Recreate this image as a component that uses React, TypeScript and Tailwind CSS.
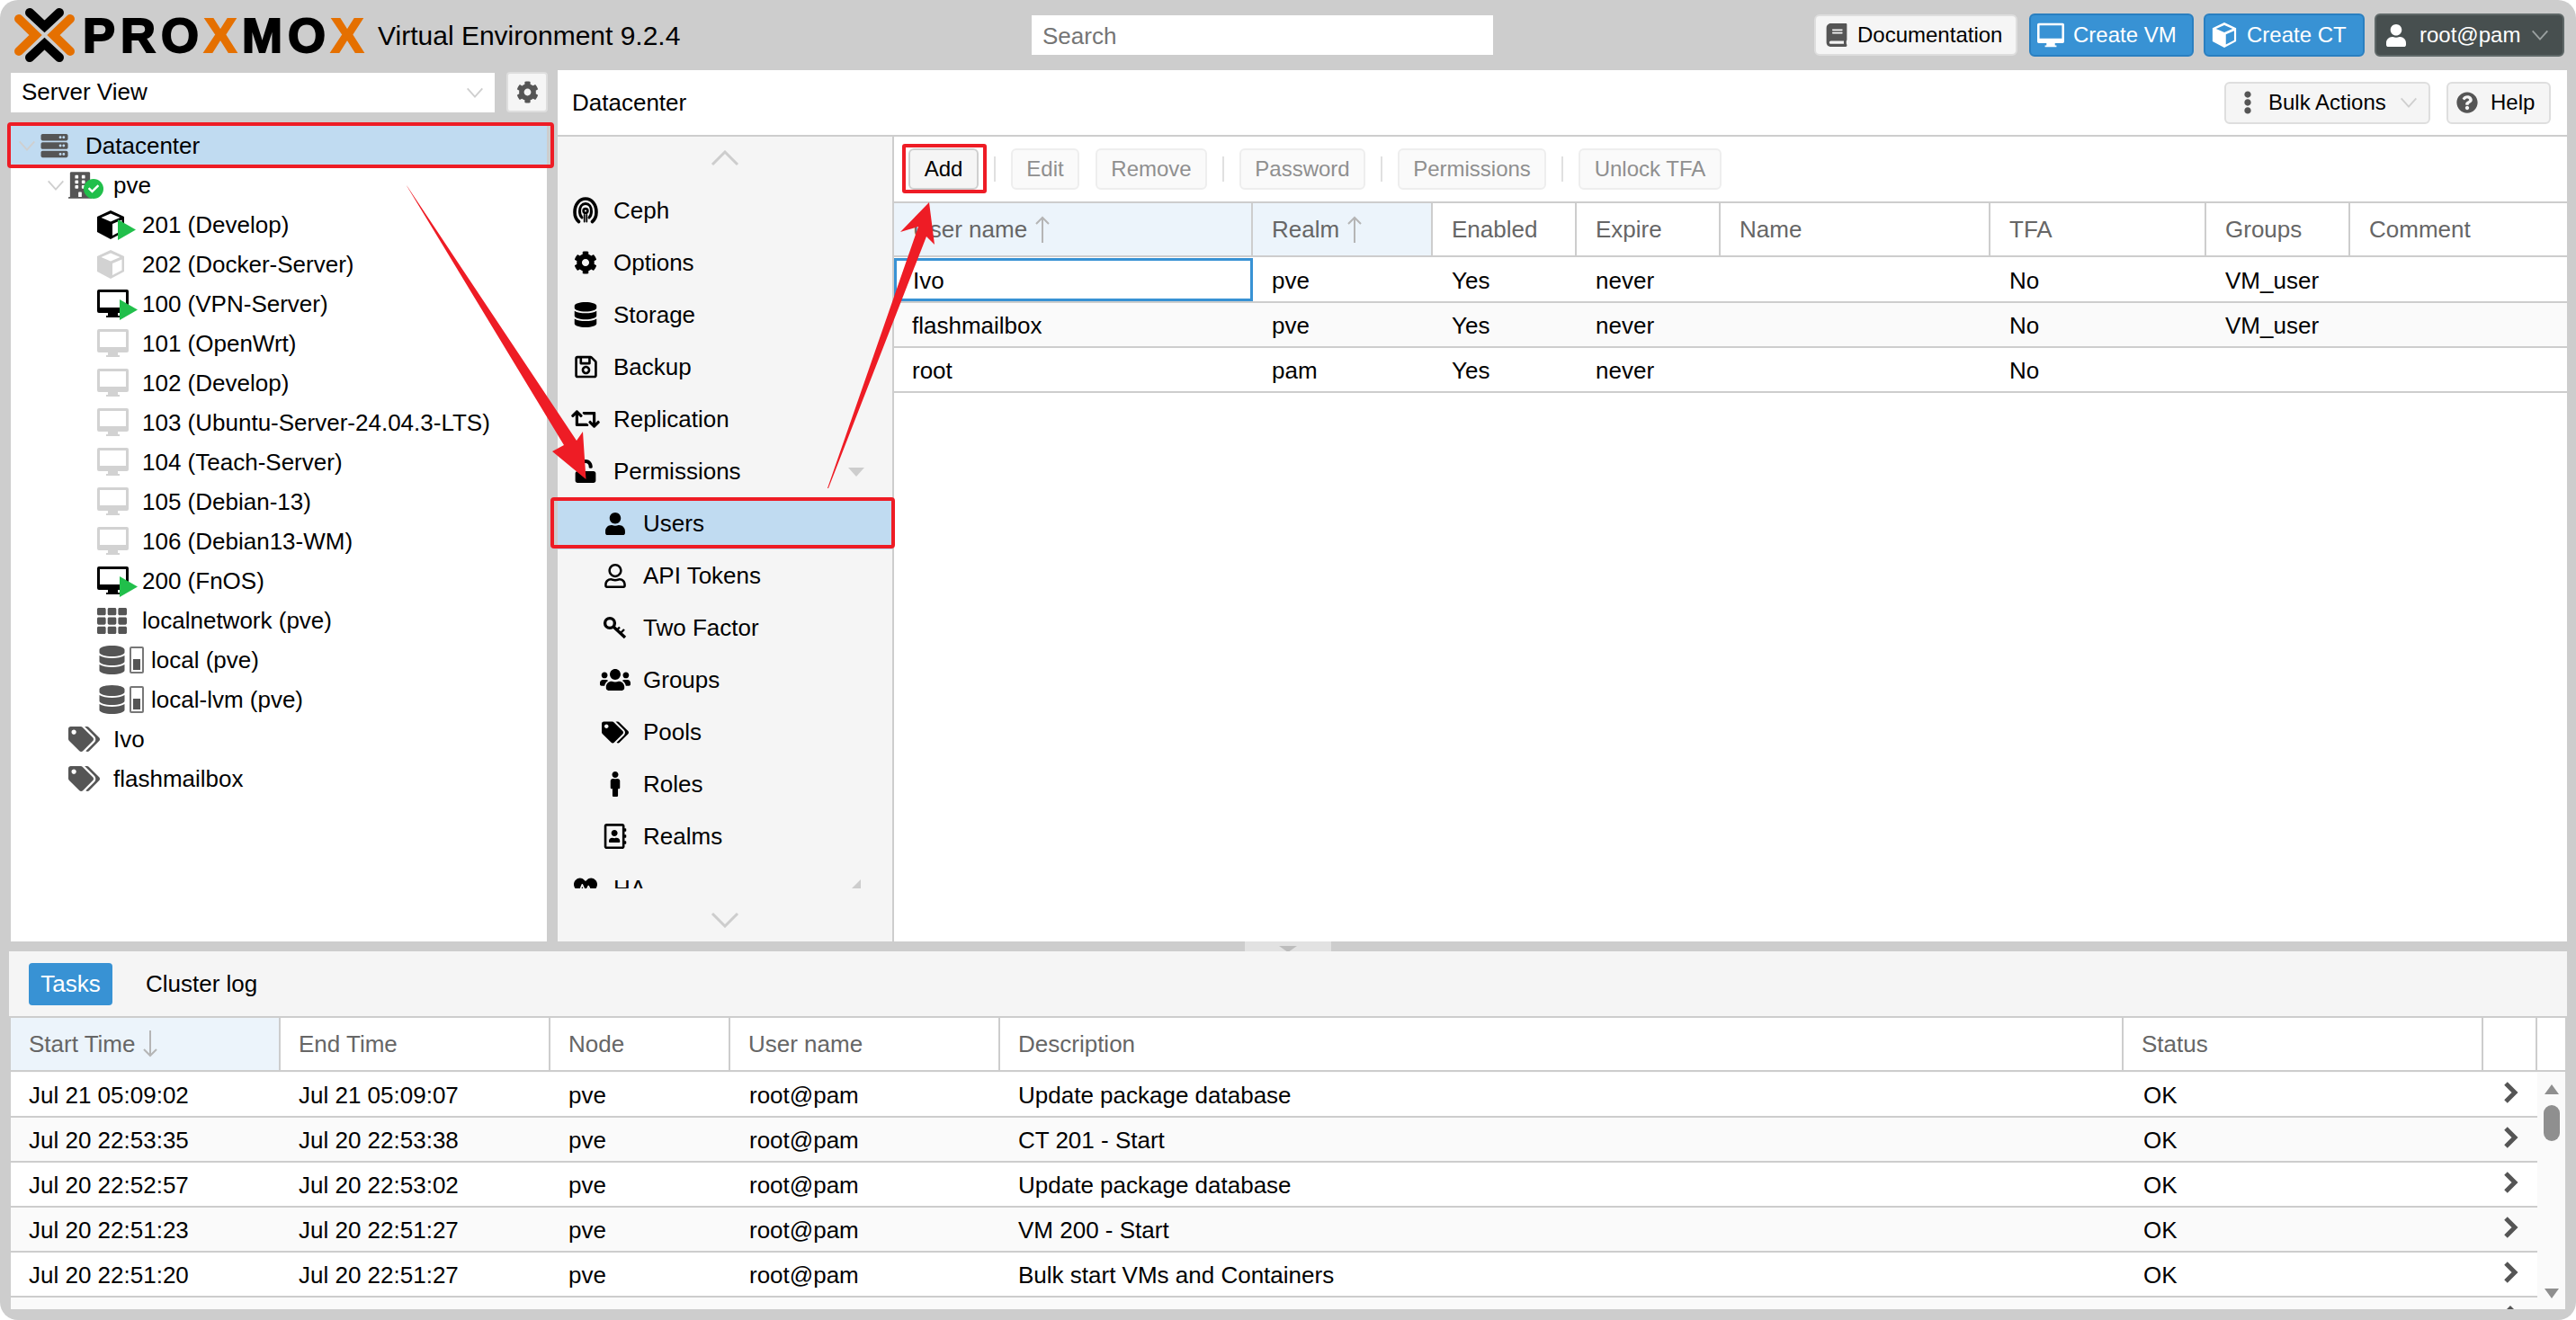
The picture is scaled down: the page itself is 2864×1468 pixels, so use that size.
import React from 'react';
import {
  FaBook, FaCog, FaDatabase, FaRegSave, FaRetweet, FaUnlock, FaUser, FaRegUser, FaUsers, FaTags,
  FaMale, FaRegAddressBook, FaQuestionCircle, FaEllipsisV, FaHeartbeat, FaTh, FaServer, FaBuilding, FaCheck,
} from 'react-icons/fa';

const Monitor = ({ className }: { className: string }) => (
  <svg viewBox="0 0 35 31" className={className} fill="currentColor">
    <path fillRule="evenodd" d="M2 0h31a2 2 0 0 1 2 2v22a2 2 0 0 1-2 2H23v3h2v2H10v-2h2v-3H2a2 2 0 0 1-2-2V2a2 2 0 0 1 2-2zM3 3v17h29V3z" />
  </svg>
);

const Cube = ({ className }: { className: string }) => (
  <svg viewBox="0 0 30 32" className={className} fill="currentColor">
    <path fillRule="evenodd" d="M15 0L30 7V24L15 32L0 24V7zM15 3.5L4.5 8L15 12.5L25.5 8zM17 15V28L27.5 22.5V10.5z" />
  </svg>
);

const Play = ({ vm }: { vm: boolean }) => (
  <svg viewBox="0 0 20 23" className={`absolute w-[20px] h-[23px] ${vm ? 'left-[25px] top-[11px]' : 'left-[23px] top-[10px]'}`}>
    <polygon points="0,0 20,11.5 0,23" fill="#21bf4b" />
  </svg>
);

const StatusBar = () => (
  <span className="ml-[5px] w-[16px] h-[30px] border-2 border-[#777] rounded-[2px] flex flex-col justify-end p-[2px]">
    <span className="block h-[12px] bg-[#555]" />
  </span>
);

const Ceph = () => (
  <svg viewBox="0 0 28 30" className="w-[28px] h-[30px]" fill="none" stroke="currentColor" strokeWidth="3.6" strokeLinecap="round">
    <path d="M6.5 27.5C3.5 25 2 21.5 2 17C2 8.5 7 2 14 2S26 8.5 26 17C26 21.5 24.5 25 21.5 27.5" />
    <path d="M10 23C8 21 7.5 18.5 7.5 16C7.5 11 10 7.5 14 7.5S20.5 11 20.5 16C20.5 18.5 20 21 18 23" strokeWidth="3" />
    <circle cx="14" cy="15.5" r="2.4" strokeWidth="2.6" />
    <path d="M12.7 20V27.5M15.3 20V27.5" strokeWidth="1.8" />
  </svg>
);

const Key = () => (
  <svg viewBox="0 0 28 26" className="w-[28px] h-[26px]" fill="none" stroke="currentColor" strokeWidth="3.4">
    <circle cx="8" cy="8" r="5.4" />
    <path d="M12 12L25 24" />
    <path d="M20 19L24 15M16 15.5L19 12.5" strokeWidth="2.4" />
  </svg>
);

const Arrow = ({ down }: { down?: boolean }) => (
  <svg viewBox="0 0 18 30" className="w-[18px] h-[30px] ml-[8px]" fill="none" stroke="#b5b5b5" strokeWidth="2">
    {down ? <path d="M9 0V28M2 21L9 28L16 21" /> : <path d="M9 30V2M2 9L9 2L16 9" />}
  </svg>
);

const VChevron = ({ up }: { up?: boolean }) => (
  <svg viewBox="0 0 32 18" className="w-[32px] h-[18px]" fill="none" stroke="#cdcdcd" strokeWidth="3">
    {up ? <polyline points="2,16 16,2 30,16" /> : <polyline points="2,2 16,16 30,2" />}
  </svg>
);

const Caret = ({ className }: { className: string }) => (
  <svg viewBox="0 0 26 26" className={`shrink-0 ${className}`} fill="none" stroke="currentColor" strokeWidth="2">
    <polyline points="4,8 13,18 22,8" />
  </svg>
);

const TreeRow = ({ pad, icon, iconW, active, chevronPad, children }: { pad: string; icon: React.ReactNode; iconW: string; active?: boolean; chevronPad?: string; children: React.ReactNode }) => (
  <div className={`h-[44px] flex items-center relative ${pad} ${active ? 'bg-[#c0dbf1]' : ''}`}>
    {chevronPad ? <Caret className={`absolute ${chevronPad} w-[24px] h-[24px] text-[#cfcfcf]`} /> : null}
    <span className={`flex items-center relative shrink-0 ${iconW}`}>{icon}</span>
    <span className="whitespace-nowrap">{children}</span>
  </div>
);

const vms: [string, string, boolean][] = [
  ['201 (Develop)', 'ct', true],
  ['202 (Docker-Server)', 'ct', false],
  ['100 (VPN-Server)', 'vm', true],
  ['101 (OpenWrt)', 'vm', false],
  ['102 (Develop)', 'vm', false],
  ['103 (Ubuntu-Server-24.04.3-LTS)', 'vm', false],
  ['104 (Teach-Server)', 'vm', false],
  ['105 (Debian-13)', 'vm', false],
  ['106 (Debian13-WM)', 'vm', false],
  ['200 (FnOS)', 'vm', true],
];

const Tree = () => (
  <div className="w-[596px] flex-1 mt-[12px] bg-white pt-[3px] overflow-hidden">
    <TreeRow pad="pl-[31px]" iconW="w-[52px]" active chevronPad="left-[6px]" icon={<FaServer className="w-[35px] h-[30px] text-[#555]" />}>Datacenter</TreeRow>
    <TreeRow pad="pl-[64px]" iconW="w-[50px]" chevronPad="left-[38px]" icon={
      <span className="relative block w-[40px] h-[34px]">
        <FaBuilding className="absolute left-0 top-0 w-[26px] h-[34px] text-[#555]" />
        <span className="absolute left-[17px] top-[10px] w-[22px] h-[22px] rounded-full bg-[#21bf4b] flex items-center justify-center">
          <FaCheck className="w-[12px] h-[12px] text-white" />
        </span>
      </span>
    }>pve</TreeRow>
    {vms.map(([name, kind, running]) => (
      <TreeRow key={name} pad="pl-[96px]" iconW="w-[50px]" icon={
        <span className="relative block w-[36px] h-[32px]">
          {kind === 'ct'
            ? <Cube className={`w-[30px] h-[32px] ${running ? 'text-black' : 'text-[#d2d2d2]'}`} />
            : <Monitor className={`w-[35px] h-[31px] ${running ? 'text-black' : 'text-[#d2d2d2]'}`} />}
          {running ? <Play vm={kind === 'vm'} /> : null}
        </span>
      }>{name}</TreeRow>
    ))}
    <TreeRow pad="pl-[96px]" iconW="w-[50px]" icon={<FaTh className="w-[33px] h-[33px] text-[#555]" />}>localnetwork (pve)</TreeRow>
    {['local (pve)', 'local-lvm (pve)'].map((n) => (
      <TreeRow key={n} pad="pl-[98px]" iconW="w-[58px]" icon={<><FaDatabase className="w-[29px] h-[32px] text-[#555]" /><StatusBar /></>}>{n}</TreeRow>
    ))}
    {['Ivo', 'flashmailbox'].map((n) => (
      <TreeRow key={n} pad="pl-[64px]" iconW="w-[50px]" icon={<FaTags className="w-[35px] h-[30px] text-[#555]" />}>{n}</TreeRow>
    ))}
  </div>
);

const navItems: [string, React.ReactNode, boolean, boolean][] = [
  ['Ceph', <Ceph />, false, false],
  ['Options', <FaCog className="w-[26px] h-[26px]" />, false, false],
  ['Storage', <FaDatabase className="w-[26px] h-[28px]" />, false, false],
  ['Backup', <FaRegSave className="w-[25px] h-[28px]" />, false, false],
  ['Replication', <FaRetweet className="w-[32px] h-[28px]" />, false, false],
  ['Permissions', <FaUnlock className="w-[26px] h-[26px]" />, false, false],
  ['Users', <FaUser className="w-[22px] h-[25px]" />, true, true],
  ['API Tokens', <FaRegUser className="w-[24px] h-[27px]" />, true, false],
  ['Two Factor', <Key />, true, false],
  ['Groups', <FaUsers className="w-[34px] h-[28px]" />, true, false],
  ['Pools', <FaTags className="w-[30px] h-[25px]" />, true, false],
  ['Roles', <FaMale className="w-[18px] h-[28px]" />, true, false],
  ['Realms', <FaRegAddressBook className="w-[26px] h-[28px]" />, true, false],
  ['HA', <FaHeartbeat className="w-[28px] h-[26px]" />, false, false],
];

const Nav = () => (
  <div className="w-[374px] shrink-0 bg-[#f5f5f5] border-r-2 border-[#cdcdcd] flex flex-col">
    <div className="h-[53px] flex items-start justify-center pt-[15px]"><VChevron up /></div>
    <div className="h-[783px] overflow-hidden">
      {navItems.map(([label, icon, sub, active]) => (
        <div key={label} className={`h-[58px] flex items-center relative ${active ? 'bg-[#c0dbf1]' : ''}`}>
          <span className={`${sub ? 'ml-[44px] mr-[11px]' : 'ml-[11px] mr-[11px]'} w-[40px] flex justify-center shrink-0`}>{icon}</span>
          <span>{label}</span>
          {label === 'Permissions' ? <span className="absolute left-[323px] top-[25px] w-0 h-0 border-x-[9px] border-x-transparent border-t-[10px] border-t-[#cdcdcd]" /> : null}
          {label === 'HA' ? <span className="absolute left-[326px] top-[19px] w-0 h-0 border-l-[11px] border-l-transparent border-b-[11px] border-b-[#cdcdcd]" /> : null}
        </div>
      ))}
    </div>
    <div className="flex-1 flex justify-center pt-[26px]"><VChevron /></div>
  </div>
);

const ToolButton = ({ label, w, on }: { label: string; w: string; on?: boolean }) => (
  <div className={`h-[46px] ${w} rounded-[6px] border-2 flex items-center justify-center text-[24px] ${on ? 'bg-[#f5f5f5] border-[#cfcfcf] text-black' : 'bg-[#fafafa] border-[#eeeeee] text-[#8f8f8f]'}`}>{label}</div>
);
const Sep = () => <div className="w-[2px] h-[28px] bg-[#e0e0e0] mx-[17px]" />;

const userCols = 'grid grid-cols-[399px_200px_160px_160px_300px_240px_160px_239px]';
const userHead = ['User name', 'Realm', 'Enabled', 'Expire', 'Name', 'TFA', 'Groups', 'Comment'];
const userRows = [
  ['Ivo', 'pve', 'Yes', 'never', '', 'No', 'VM_user', ''],
  ['flashmailbox', 'pve', 'Yes', 'never', '', 'No', 'VM_user', ''],
  ['root', 'pam', 'Yes', 'never', '', 'No', '', ''],
];

const UsersPanel = () => (
  <div className="flex-1 flex flex-col bg-white min-w-0">
    <div className="h-[74px] border-b-2 border-[#cdcdcd] flex items-center pl-[16px]">
      <ToolButton label="Add" w="w-[78px]" on />
      <Sep />
      <ToolButton label="Edit" w="w-[76px] mr-[18px]" />
      <ToolButton label="Remove" w="w-[124px]" />
      <Sep />
      <ToolButton label="Password" w="w-[140px]" />
      <Sep />
      <ToolButton label="Permissions" w="w-[165px]" />
      <Sep />
      <ToolButton label="Unlock TFA" w="w-[159px]" />
    </div>
    <div className={`${userCols} h-[60px] border-b-2 border-[#cdcdcd] text-[#666]`}>
      {userHead.map((h, i) => (
        <div key={h} className={`flex items-center pl-[21px] border-r-2 border-[#cdcdcd] last:border-r-0 ${i < 2 ? 'bg-[#ecf4fb]' : ''}`}>
          {h}{i < 2 ? <Arrow /> : null}
        </div>
      ))}
    </div>
    <div className="pt-px">
      {userRows.map((r, i) => (
        <div key={r[0]} className={`${userCols} h-[50px] border-b-2 border-[#cdcdcd] ${i === 1 ? 'bg-[#fafafa]' : ''}`}>
          {r.map((c, j) => (
            <div key={j} className={`flex items-center pt-[2px] ${i === 0 && j === 0 ? 'border-[3px] border-[#3892d4] pl-[18px] pt-0' : j === 0 ? 'pl-[20px]' : 'pl-[21px]'}`}>{c}</div>
          ))}
        </div>
      ))}
    </div>
  </div>
);

const taskCols = 'grid grid-cols-[300px_300px_200px_300px_1249px_400px_60px_31px]';
const taskRowCols = 'grid grid-cols-[300px_300px_200px_300px_1249px_400px_60px]';
const taskHead = ['Start Time', 'End Time', 'Node', 'User name', 'Description', 'Status', '', ''];
const tasks = [
  ['Jul 21 05:09:02', 'Jul 21 05:09:07', 'Update package database'],
  ['Jul 20 22:53:35', 'Jul 20 22:53:38', 'CT 201 - Start'],
  ['Jul 20 22:52:57', 'Jul 20 22:53:02', 'Update package database'],
  ['Jul 20 22:51:23', 'Jul 20 22:51:27', 'VM 200 - Start'],
  ['Jul 20 22:51:20', 'Jul 20 22:51:27', 'Bulk start VMs and Containers'],
  ['', '', ''],
];

const Bottom = () => (
  <div className="mx-[10px] h-[398px] flex flex-col shrink-0">
    <div className="h-[74px] shrink-0 bg-[#f5f5f5] border-b-2 border-[#cdcdcd] flex items-center pl-[22px]">
      <div className="w-[93px] h-[47px] rounded-[4px] bg-[#3892d4] text-white flex items-center justify-center">Tasks</div>
      <div className="ml-[37px]">Cluster log</div>
    </div>
    <div className="flex-1 border-x-2 border-[#cdcdcd] flex flex-col min-h-0 bg-white">
      <div className={`${taskCols} h-[60px] shrink-0 border-b-2 border-[#cdcdcd] text-[#666]`}>
        {taskHead.map((h, i) => (
          <div key={i} className={`flex items-center pl-[20px] border-r-2 border-[#cdcdcd] last:border-r-0 ${i === 0 ? 'bg-[#ecf4fb]' : ''}`}>
            {h}{i === 0 ? <Arrow down /> : null}
          </div>
        ))}
      </div>
      <div className="flex flex-1 min-h-0 overflow-hidden pt-px bg-[#fafafa]">
        <div className="w-[2809px] shrink-0">
          {tasks.map((t, i) => (
            <div key={i} className={`${taskRowCols} h-[50px] border-b-2 border-[#cdcdcd] ${i % 2 ? 'bg-[#fafafa]' : 'bg-white'}`}>
              <div className="flex items-center pt-[2px] pl-[20px]">{t[0]}</div>
              <div className="flex items-center pt-[2px] pl-[20px]">{t[1]}</div>
              <div className="flex items-center pt-[2px] pl-[20px]">{t[0] && 'pve'}</div>
              <div className="flex items-center pt-[2px] pl-[21px]">{t[0] && 'root@pam'}</div>
              <div className="flex items-center pt-[2px] pl-[20px]">{t[2]}</div>
              <div className="flex items-center pt-[2px] pl-[22px]">{t[0] && 'OK'}</div>
              {t[0] ? (
                <div className="flex items-center justify-center pb-[5px]">
                  <svg viewBox="0 0 17 26" className="w-[17px] h-[26px]" fill="none" stroke="#555" strokeWidth="5">
                    <polyline points="3,3 13,13 3,23" />
                  </svg>
                </div>
              ) : (
                <div className="flex justify-center pt-[9px]">
                  <span className="w-0 h-0 border-x-[5px] border-x-transparent border-b-[5px] border-b-[#555]" />
                </div>
              )}
            </div>
          ))}
        </div>
        <div className="w-[31px] relative flex flex-col items-center pt-[13px]">
          <span className="w-0 h-0 border-x-[8px] border-x-transparent border-b-[11px] border-b-[#8f8f8f]" />
          <span className="mt-[12px] w-[18px] h-[40px] rounded-[9px] bg-[#8f8f8f]" />
          <span className="mt-auto mb-[12px] w-0 h-0 border-x-[8px] border-x-transparent border-t-[11px] border-t-[#8f8f8f]" />
        </div>
      </div>
    </div>
  </div>
);

const Annotations = () => (
  <svg className="absolute left-0 top-0 w-[2864px] h-[1468px] pointer-events-none" viewBox="0 0 2864 1468">
    <g fill="none" stroke="#ee1c25" strokeWidth="4">
      <rect x="10" y="138" width="604" height="47" rx="2" />
      <rect x="614" y="555" width="379" height="53" rx="2" />
      <rect x="1005" y="162" width="90" height="51" rx="1" />
    </g>
    <g fill="#ee1c25">
      <polygon points="452,206 641,490 648,480 651.5,533 614,502 627,495 453,208" />
      <polygon points="920,543 1021,252 1001,258 1033,225 1039,272 1030,263 921,543" />
    </g>
  </svg>
);

export default function App() {
  return (
    <div className="relative w-[2864px] h-[1468px] bg-white overflow-hidden font-['Liberation_Sans',Arial,sans-serif] text-[26px] text-black">
      <div className="h-full rounded-[20px] bg-[#cdcdcd] flex flex-col">
        {/* top bar */}
        <header className="h-[78px] shrink-0 flex items-center">
          <div className="w-[1147px] shrink-0 flex items-center">
            <svg viewBox="0 0 100 76" className="w-[100px] h-[76px] shrink-0" fill="none" strokeWidth="10" strokeLinecap="round">
              <polyline points="21,20 39.5,38 21,56" stroke="#e57000" strokeLinejoin="miter" />
              <polyline points="78,20 59.5,38 78,56" stroke="#e57000" strokeLinejoin="miter" />
              <polyline points="33,13 49.5,28.5 66,13" stroke="#000" strokeLinejoin="miter" />
              <polyline points="33,63 49.5,47.5 66,63" stroke="#000" strokeLinejoin="miter" />
            </svg>
            <span className="-ml-[8px] text-[54px] leading-none font-bold tracking-[6px] [-webkit-text-stroke:2px_black]">
              PRO<span className="text-[#e57000] [-webkit-text-stroke:2px_#e57000]">X</span>MO<span className="text-[#e57000] [-webkit-text-stroke:2px_#e57000]">X</span>
            </span>
            <span className="ml-[10px] text-[30px] whitespace-nowrap">Virtual Environment 9.2.4</span>
          </div>
          <div className="w-[513px] h-[44px] bg-white flex items-center pl-[12px] pt-[3px] text-[#757575]">Search</div>
          <div className="flex-1 flex justify-end items-center pr-[13px] text-[24px]">
            <div className="w-[226px] h-[46px] bg-[#f5f5f5] border-2 border-[#dedede] rounded-[6px] flex items-center pl-[10px]">
              <FaBook className="w-[26px] h-[26px] text-[#555] mr-[10px]" />Documentation
            </div>
            <div className="ml-[13px] w-[183px] h-[48px] bg-[#3892d4] border-2 border-[#2a7fc0] rounded-[6px] flex items-center pl-[7px] text-white">
              <Monitor className="w-[30px] h-[28px] mr-[10px]" />Create VM
            </div>
            <div className="ml-[11px] w-[179px] h-[48px] bg-[#3892d4] border-2 border-[#2a7fc0] rounded-[6px] flex items-center pl-[7px] text-white">
              <Cube className="w-[28px] h-[28px] mr-[11px]" />Create CT
            </div>
            <div className="ml-[11px] w-[211px] h-[48px] bg-[#474f4f] border-2 border-[#5f6868] rounded-[6px] flex items-center pl-[11px] text-white">
              <FaUser className="w-[22px] h-[27px] mr-[15px]" />root@pam
              <Caret className="ml-[10px] w-[24px] h-[24px] text-[#9aa0a0]" />
            </div>
          </div>
        </header>
        {/* main */}
        <div className="flex-1 flex min-h-0 pr-[10px]">
          <div className="ml-[12px] w-[597px] shrink-0 flex flex-col pt-[2px]">
            <div className="flex items-center shrink-0">
              <div className="w-[538px] h-[44px] bg-white flex items-center pl-[12px] pr-[10px] justify-between">
                Server View<Caret className="w-[24px] h-[24px] text-[#cfcfcf]" />
              </div>
              <div className="ml-[13px] w-[46px] h-[45px] bg-[#f5f5f5] rounded-[4px] border-2 border-[#dedede] flex items-center justify-center">
                <FaCog className="w-[25px] h-[25px] text-[#555]" />
              </div>
            </div>
            <Tree />
          </div>
          <div className="ml-[11px] flex-1 flex flex-col min-w-0">
            <div className="h-[74px] shrink-0 bg-white border-b-2 border-[#cdcdcd] flex items-center pl-[16px] pr-[18px]">
              <span>Datacenter</span>
              <div className="ml-auto w-[229px] h-[47px] bg-[#f5f5f5] border-2 border-[#dedede] rounded-[6px] flex items-center pl-[16px] text-[24px]">
                <FaEllipsisV className="w-[16px] h-[26px] text-[#555] mr-[15px]" />Bulk Actions
                <Caret className="ml-[13px] w-[24px] h-[24px] text-[#cfcfcf]" />
              </div>
              <div className="ml-[18px] w-[116px] h-[47px] bg-[#f5f5f5] border-2 border-[#dedede] rounded-[6px] flex items-center pl-[9px] text-[24px]">
                <FaQuestionCircle className="w-[24px] h-[26px] text-[#555] mr-[14px]" />Help
              </div>
            </div>
            <div className="flex-1 flex min-h-0">
              <Nav />
              <UsersPanel />
            </div>
          </div>
        </div>
        {/* splitter */}
        <div className="h-[11px] shrink-0 flex justify-center">
          <div className="w-[96px] bg-[#e2e2e2] flex justify-center items-end">
            <span className="w-0 h-0 border-x-[10px] border-x-transparent border-t-[7px] border-t-[#bdbdbd] -mb-px" />
          </div>
        </div>
        <Bottom />
        <div className="h-[12px] shrink-0" />
      </div>
      <Annotations />
    </div>
  );
}
